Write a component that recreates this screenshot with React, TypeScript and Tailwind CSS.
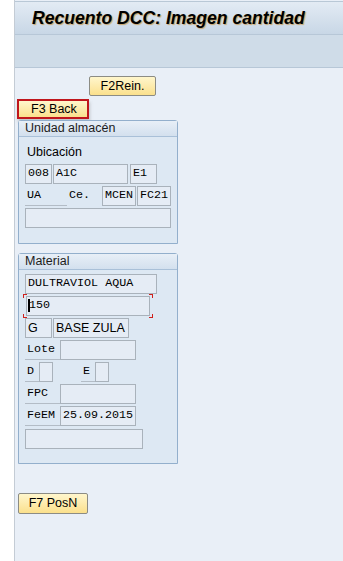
import React from "react";

const sans = "font-['Liberation_Sans','Noto_Sans',sans-serif]";
const mono = "font-['Liberation_Mono','DejaVu_Sans_Mono',monospace]";

const Field = ({ w, text = "", m = true, cls = "" }: { w: string; text?: string; m?: boolean; cls?: string }) => (
  <div
    className={`${w} h-[20px] shrink-0 border border-[#a9b2bb] bg-[#e5ecf5] flex items-center px-[2px] text-[11.7px] text-black leading-none ${m ? mono : sans + " text-[12.5px]"} ${cls}`}
  >
    {text}
  </div>
);

const Label = ({ w, text, line = true }: { w: string; text: string; line?: boolean }) => (
  <div className={`${w} h-[20px] shrink-0 flex items-center pl-[2px] text-[11.7px] ${mono} ${line ? "border-b border-[#b3bcc6]" : ""}`}>
    {text}
  </div>
);

const Group = ({ title, h, children }: { title: string; h: string; children: React.ReactNode }) => (
  <div className={`ml-[3px] w-[160px] ${h} border border-[#93afcc] rounded-t-[3px] bg-[#dde8f3] flex flex-col`}>
    <div className={`h-[16px] bg-gradient-to-b from-[#e8eff7] to-[#d3e0ee] border-b border-[#a9c0d8] flex items-center pl-[6px] text-[12.5px] text-[#1c1c1c] ${sans}`}>
      {title}
    </div>
    <div className="flex flex-col gap-[2px] pl-[6px]">{children}</div>
  </div>
);

const Btn = ({ text, cls = "" }: { text: string; cls?: string }) => (
  <div
    className={`h-[20px] flex items-center justify-center rounded-[2px] border border-[#8c8c84] bg-gradient-to-b from-[#fff6cc] to-[#fbe08c] text-[12.5px] text-black ${sans} ${cls}`}
  >
    {text}
  </div>
);

export default function App() {
  return (
    <div className="w-[343px] h-[561px] flex bg-white overflow-hidden">
      <div className="w-[14px] shrink-0 bg-white" />
      <div className="flex-1 flex flex-col border-l border-[#c4ccd5] bg-[#e9eff7]">
        <div className="h-[33px] mt-[1px] border-t border-[#b9c8d6] bg-gradient-to-b from-[#e3ebf4] to-[#c8d7e6] flex items-center pl-[17px]">
          <span className={`text-[17.6px] font-bold italic text-black [text-shadow:1px_1px_1px_#c9a56a] ${sans}`}>
            Recuento DCC: Imagen cantidad
          </span>
        </div>
        <div className="h-[34px] bg-[#cfdce8] border-t border-[#b7c7d7] border-b border-[#a7b8c9]" />

        <div className="flex flex-col">
          <Btn text="F2Rein." cls="ml-[74px] mt-[8px] w-[67px]" />
          <div className="ml-[2px] mt-[3px] w-[72px] h-[20px] border-2 border-[#c0161c] shadow-[1px_3px_3px_rgba(120,120,120,0.35)]">
            <div className={`h-full bg-gradient-to-b from-[#fff6cc] to-[#fbe08c] flex items-center pl-[12px] text-[12.5px] text-black ${sans}`}>
              F3 Back
            </div>
          </div>

          <div className="mt-px">
            <Group title="Unidad almacén" h="h-[124px]">
              <div className={`h-[20px] mt-[5px] flex items-center pl-[2px] text-[12.5px] ${sans}`}>Ubicación</div>
              <div className="flex">
                <Field w="w-[27px]" text="008" />
                <Field w="w-[75px]" text="A1C" cls="ml-[1px]" />
                <Field w="w-[27px]" text="E1" cls="ml-[2px]" />
              </div>
              <div className="flex">
                <Label w="w-[42px]" text="UA" />
                <Label w="w-[33px]" text="Ce." line={false} />
                <Field w="w-[34px]" text="MCEN" cls="ml-[2px]" />
                <Field w="w-[34px]" text="FC21" cls="ml-[1px]" />
              </div>
              <Field w="w-[146px]" />
            </Group>
          </div>

          <div className="mt-[9px]">
            <Group title="Material" h="h-[211px]">
              <div className="mt-[4px]">
                <Field w="w-[132px]" text="DULTRAVIOL AQUA" />
              </div>
              <div className="relative w-[124px] ml-[1px]">
                <Field w="w-[124px]" text="150" />
                <span className="absolute left-[2px] top-[3px] w-[2px] h-[13px] bg-black" />
                <span className="absolute -left-[3px] -top-[2px] w-[4px] h-[4px] border-l border-t border-[#d0201c]" />
                <span className="absolute -right-[3px] -top-[2px] w-[4px] h-[4px] border-r border-t border-[#d0201c]" />
                <span className="absolute -left-[3px] -bottom-[2px] w-[4px] h-[4px] border-l border-b border-[#d0201c]" />
                <span className="absolute -right-[3px] -bottom-[2px] w-[4px] h-[4px] border-r border-b border-[#d0201c]" />
              </div>
              <div className="flex">
                <Field w="w-[27px]" text="G" m={false} />
                <Field w="w-[76px]" text="BASE ZULA" m={false} cls="ml-[1px]" />
              </div>
              <div className="flex">
                <Label w="w-[35px]" text="Lote" />
                <Field w="w-[76px]" />
              </div>
              <div className="flex">
                <Label w="w-[14px]" text="D" />
                <Field w="w-[14px]" />
                <div className="w-[28px]" />
                <Label w="w-[14px]" text="E" />
                <Field w="w-[14px]" />
              </div>
              <div className="flex">
                <Label w="w-[35px]" text="FPC" />
                <Field w="w-[76px]" />
              </div>
              <div className="flex">
                <Label w="w-[35px]" text="FeEM" />
                <Field w="w-[76px]" text="25.09.2015" />
              </div>
              <Field w="w-[118px]" cls="mt-[1px]" />
            </Group>
          </div>

          <Btn text="F7 PosN" cls="ml-[3px] mt-[29px] w-[70px] h-[21px]" />
        </div>
      </div>
    </div>
  );
}
